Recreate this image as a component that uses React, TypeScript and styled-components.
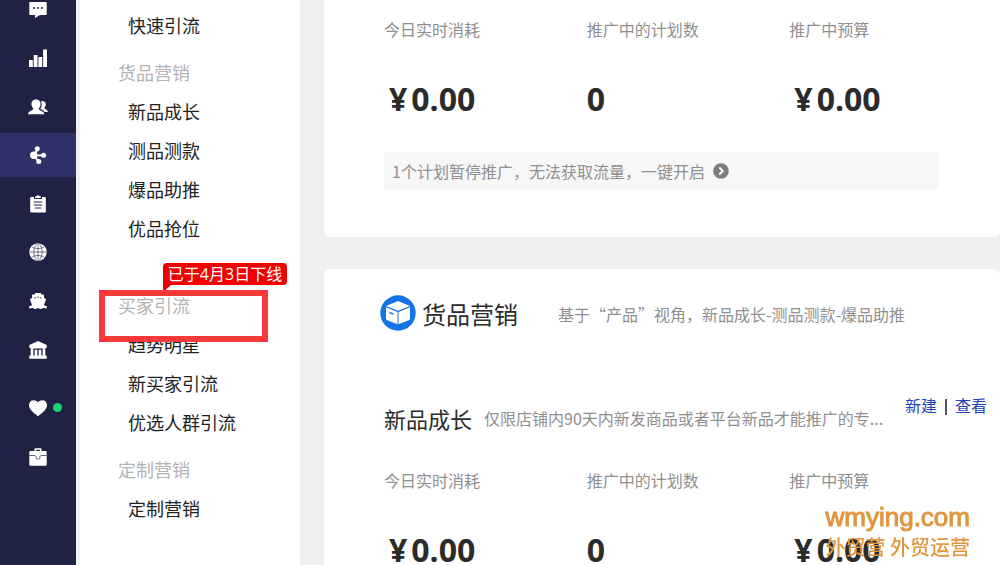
import React from "react";
import styled, { createGlobalStyle } from "styled-components";

const GlobalStyle = createGlobalStyle`
  *, *::before, *::after { box-sizing: border-box; }
  body {
    margin: 0;
    background: #f0f0f0;
    color: #2b2b2b;
    font-family: "Noto Sans CJK SC", "Open Sans", sans-serif;
    font-size: 16px;
  }
  ul, h2, h3, p, dl, dd { margin: 0; padding: 0; }
  ul { list-style: none; }
`;

const Shell = styled.div`
  display: flex;
  height: 100vh;
  overflow: hidden;
`;

const Rail = styled.nav`
  flex: 0 0 76px;
  background: #1f2244;
`;

const RailGroup = styled.ul<{ $rows: number; $height: number }>`
  display: grid;
  grid-template-rows: repeat(${(p) => p.$rows}, 1fr);
  align-items: center;
  height: ${(p) => p.$height}px;
`;

const RailList = styled.div`
  display: grid;
  gap: 9px;
  margin-top: -15px;
`;

const RailButton = styled.button<{ $active?: boolean }>`
  position: relative;
  display: flex;
  align-items: center;
  justify-content: center;
  width: 100%;
  height: 44px;
  padding: 0;
  border: 0;
  background: ${(p) => (p.$active ? "#2f3268" : "transparent")};
  color: #fff;
  cursor: pointer;
`;

const Dot = styled.span`
  position: absolute;
  top: 17px;
  right: 14px;
  width: 9px;
  height: 9px;
  border-radius: 50%;
  background: #12d673;
`;

const Menu = styled.aside`
  flex: 0 0 224px;
  padding: 6px 0 0 38px;
  border-left: 4px solid #f1f1f5;
  background: #fff;
`;

const MenuHeading = styled.h2<{ $gap?: number }>`
  position: relative;
  margin-top: ${(p) => p.$gap ?? 8}px;
  color: #b3b3b3;
  font-size: 18px;
  font-weight: 400;
  line-height: 39px;
`;

const MenuLink = styled.a`
  display: block;
  padding-left: 10px;
  color: #222;
  font-size: 18px;
  line-height: 39px;
  text-decoration: none;
`;

const Highlight = styled.span`
  position: absolute;
  z-index: 1;
  top: 4px;
  left: -19px;
  width: 169px;
  height: 52px;
  border: 6px solid #f8383a;
`;

const OfflineTag = styled.span`
  position: absolute;
  top: -23px;
  left: 45px;
  width: 124px;
  height: 22px;
  border-radius: 4px 4px 4px 0;
  background: #f00000;
  color: #fff;
  font-family: "Open Sans", "Noto Sans CJK SC", sans-serif;
  font-size: 16px;
  line-height: 22px;
  text-align: center;
  white-space: nowrap;

  &::after {
    content: "";
    position: absolute;
    top: 22px;
    left: 0;
    border-top: 7px solid #f00000;
    border-right: 8px solid transparent;
  }
`;

const Main = styled.main`
  flex: 1;
  min-width: 0;
  padding-left: 24px;
`;

const Card = styled.section<{ $top: number }>`
  margin-bottom: 32px;
  padding: ${(p) => p.$top}px 8px 48px 60px;
  border-radius: 6px;
  background: #fff;

  &:first-child {
    border-top-left-radius: 0;
    border-top-right-radius: 0;
  }
`;

const Metrics = styled.dl`
  display: grid;
  grid-template-columns: repeat(3, 1fr);
`;

const MetricLabel = styled.dt`
  color: #8f8f8f;
  line-height: 24px;
`;

const MetricValue = styled.dd`
  margin-top: 38px;
  font-family: "Open Sans", "Noto Sans CJK SC", sans-serif;
  font-size: 32px;
  font-weight: 700;
  line-height: 40px;
`;

const Currency = styled.span`
  margin: 0 4px 0 5px;
`;

const Notice = styled.div`
  display: flex;
  align-items: center;
  gap: 8px;
  height: 37px;
  margin: 33px 53px 0 0;
  padding-left: 8px;
  background: #f7f7f7;
  color: #8f8f8f;
`;

const NoticeButton = styled.button`
  display: flex;
  padding: 0;
  border: 0;
  background: none;
  cursor: pointer;
`;

const CardHeader = styled.header`
  display: flex;
  align-items: center;
  height: 36px;
  margin-left: -4px;
`;

const HeaderText = styled.div`
  display: flex;
  align-items: center;
  gap: 40px;
  padding: 2px 0 0 6px;
`;

const CardTitle = styled.h2`
  font-size: 24px;
  font-weight: 400;
  line-height: 36px;
  white-space: nowrap;
`;

const Hint = styled.p`
  color: #8f8f8f;
  line-height: 24px;
  white-space: nowrap;
`;

const PlanRow = styled.div`
  display: flex;
  align-items: center;
  height: 32px;
  margin: 71px 0 34px;
`;

const PlanTitle = styled.h3`
  margin-right: 12px;
  font-size: 22px;
  font-weight: 400;
  line-height: 32px;
  white-space: nowrap;
`;

const PlanActions = styled.div`
  display: flex;
  align-self: flex-start;
  gap: 8px;
  margin: -9px 5px 0 auto;
  line-height: 24px;
  white-space: nowrap;
`;

const ActionLink = styled.a`
  color: #1f44b8;
  text-decoration: none;
`;

const Divider = styled.span`
  width: 2px;
  height: 16px;
  margin-top: 6px;
  background: #555;
`;

const Watermark = styled.div`
  position: fixed;
  right: 30px;
  bottom: 4px;
  color: #e0963f;
  font-size: 20px;
  font-weight: 500;
  line-height: 28px;
  text-align: right;
`;

const WatermarkSite = styled.div`
  font-family: "Liberation Sans", sans-serif;
  font-size: 26px;
  font-weight: 400;
  line-height: 32px;
  -webkit-text-stroke: 1px #e0963f;
`;

const Icon = ({ children }: { children: React.ReactNode }) => (
  <svg width="18" height="18" viewBox="0 0 18 18" fill="currentColor" aria-hidden="true">
    {children}
  </svg>
);

const NAVY = "#1f2244";

const icons = {
  chat: (
    <Icon>
      <path d="M1 2h16a.7.7 0 0 1 .7.7v11.600a.7.7 0 0 1-.7.7h-6l-5 3v-3H1a.7.7 0 0 1-.7-.7V2.700A.7.7 0 0 1 1 2z" />
      <g fill={NAVY}><circle cx="5" cy="8" r="1" /><circle cx="9" cy="8" r="1" /><circle cx="13" cy="8" r="1" /></g>
    </Icon>
  ),
  chart: (
    <Icon>
      <path d="M0 11h3.800v7H0zM4.700 6h3.800v12H4.700zM9.400 8h3.800v10H9.400zM14.100.5H18V18h-3.900z" />
    </Icon>
  ),
  people: (
    <svg width="20" height="18" viewBox="0 0 20 18" fill="currentColor" aria-hidden="true">
      <path d="M8 1.500c2.900 0 4.600 1.900 4.600 4.600 0 1.800-.8 3.300-1.800 4.200v1c.5 1 5 1.700 5.500 4.900H0c.4-3.200 4.700-3.900 5.200-4.900v-1C4.200 9.400 3.400 7.900 3.400 6.100 3.400 3.400 5.100 1.500 8 1.500z" />
      <path d="M12.900 3c3-.5 4.900.9 4.900 3.300 0 1.400-.6 2.500-1.300 3.100v.9c.4.800 2.900 1.400 3.500 3.700h-3.400c-.9-1.500-2.500-2.300-4.200-3l.1-.7c.8-1 1.200-2.500 1.200-3.900 0-1.300-.3-2.500-.8-3.400z" />
    </svg>
  ),
  network: (
    <Icon>
      <path d="M5 9l4-6M5 9.300h9.500M5 9l4.700 7" stroke="currentColor" strokeWidth="1.800" />
      <circle cx="4.800" cy="9.200" r="3.700" /><circle cx="8.300" cy="2.700" r="2.500" />
      <circle cx="14.600" cy="9.300" r="2.500" /><circle cx="9.800" cy="15.500" r="2.500" />
    </Icon>
  ),
  clipboard: (
    <Icon>
      <path d="M2.200 2H5v2h8V2h2.800a1 1 0 0 1 1 1v13.500a1 1 0 0 1-1 1H2.200a1 1 0 0 1-1-1V3a1 1 0 0 1 1-1zM6.200 1.200h1.300a1.600 1.600 0 0 1 3 0h1.300V3H6.200z" />
      <path d="M4.800 7h8.400M4.800 10h8.400M5.800 13h6.400" stroke={NAVY} strokeWidth="1" />
    </Icon>
  ),
  globe: (
    <Icon>
      <circle cx="9" cy="9" r="8.700" />
      <path d="M9 .5v17M.5 9h17M3 3.800c3.500 2.300 8.500 2.300 12 0M3 14.200c3.500-2.300 8.500-2.300 12 0M7.500 1C4 5.500 4 12.500 7.500 17M10.500 1c3.500 4.500 3.500 11.500 0 16" fill="none" stroke={NAVY} strokeWidth=".6" />
    </Icon>
  ),
  ship: (
    <Icon>
      <path d="M6 1h6v1.500h2a1 1 0 0 1 1 1V6l1.500.8c.5.3.5.7.3 1.200L15 13c.8 1 1.800 1.300 3 1.300v2c-1.500.3-2.500 0-3.200-.5-1.800 1.400-3.800 1.400-5.800.2-2 1.200-4 1.200-5.800-.2-.7.5-1.700.8-3.200.5v-2c1.200 0 2.200-.3 3-1.300L1.200 8c-.2-.5-.2-.9.3-1.200L3 6V3.500a1 1 0 0 1 1-1h2z" />
      <path d="M5 6.200L9 5l4 1.200" fill="none" stroke={NAVY} strokeWidth=".8" strokeDasharray="2 1" />
    </Icon>
  ),
  bank: (
    <Icon>
      <path d="M9 0l8.700 4v3H.3V4zM1.700 6.500h14.600v8.300H1.700zM.3 14.500h17.400v3.200H.3z" />
      <path d="M5 14.500V8.200h8v6.300M9 8.200v6.300" fill="none" stroke={NAVY} strokeWidth="1.300" />
    </Icon>
  ),
  heart: (
    <Icon>
      <path d="M9 17.200C5 14 0 10.500 0 6.200 0 3.300 2 1.300 4.600 1.300 6.500 1.300 8 2.000 9 3.300c1-1.300 2.500-2 4.400-2C16 1.300 18 3.300 18 6.200c0 4.300-5 7.800-9 11z" />
    </Icon>
  ),
  briefcase: (
    <Icon>
      <path d="M5.500 3V1.300a1 1 0 0 1 1-1h5a1 1 0 0 1 1 1V3h4a1.200 1.200 0 0 1 1.200 1.200v12.300a1.200 1.200 0 0 1-1.200 1.200h-15A1.200 1.200 0 0 1 .3 16.500V4.200A1.200 1.200 0 0 1 1.500 3zm1.700 0h3.600V1.800H7.200z" fillRule="evenodd" />
      <path d="M.3 7.500h6.200M11.500 7.500h6.200M7 8v1.200a2 2 0 0 0 4 0V8" fill="none" stroke={NAVY} strokeWidth=".7" />
    </Icon>
  ),
};

type RailItem = { key: keyof typeof icons; label: string; active?: boolean; dot?: boolean };

const railMain: RailItem[] = [
  { key: "chat", label: "消息" },
  { key: "chart", label: "数据" },
  { key: "people", label: "客户" },
  { key: "network", label: "营销", active: true },
  { key: "clipboard", label: "订单" },
  { key: "globe", label: "全球" },
  { key: "ship", label: "物流" },
  { key: "bank", label: "金融" },
];

const railExtra: RailItem[] = [
  { key: "heart", label: "收藏", dot: true },
  { key: "briefcase", label: "工具" },
];

const RailItems = ({ items, height }: { items: RailItem[]; height: number }) => (
  <RailGroup $rows={items.length} $height={height}>
    {items.map((item) => (
      <li key={item.key}>
        <RailButton $active={item.active} aria-label={item.label}>
          {icons[item.key]}
          {item.dot && <Dot />}
        </RailButton>
      </li>
    ))}
  </RailGroup>
);

const MenuItems = ({ items }: { items: string[] }) => (
  <ul>
    {items.map((item) => (
      <li key={item}><MenuLink href="#">{item}</MenuLink></li>
    ))}
  </ul>
);

const Money = ({ amount }: { amount: string }) => (
  <MetricValue><Currency>¥</Currency>{amount}</MetricValue>
);

const MetricGroup = () => (
  <Metrics>
    <div><MetricLabel>今日实时消耗</MetricLabel><Money amount="0.00" /></div>
    <div><MetricLabel>推广中的计划数</MetricLabel><MetricValue>0</MetricValue></div>
    <div><MetricLabel>推广中预算</MetricLabel><Money amount="0.00" /></div>
  </Metrics>
);

const BoxLogo = () => (
  <svg width="36" height="36" viewBox="0 0 36 36" aria-hidden="true">
    <circle cx="18" cy="18" r="17.700" fill="#1473e6" />
    <path d="M18 6l12 5-12 4.800L6 11z" fill="#fff" />
    <path d="M6 12.300l11.500 4.600v12.300L7.300 25.300A1.900 1.900 0 0 1 6 23.500zM30 12.300l-11.500 4.600v12.300l10.200-3.900a1.900 1.900 0 0 0 1.300-1.800z" fill="#fff" />
    <path d="M9.500 17.500l4 1.600" stroke="#1473e6" strokeWidth="1.500" />
  </svg>
);

export default function App() {
  return (
    <>
      <GlobalStyle />
      <Shell>
        <Rail>
          <RailList>
            <RailItems items={railMain} height={389} />
            <RailItems items={railExtra} height={98} />
          </RailList>
        </Rail>
        <Menu>
          <MenuItems items={["快速引流"]} />
          <MenuHeading>货品营销</MenuHeading>
          <MenuItems items={["新品成长", "测品测款", "爆品助推", "优品抢位"]} />
          <MenuHeading $gap={38}>
            买家引流
            <OfflineTag>已于4月3日下线</OfflineTag>
            <Highlight />
          </MenuHeading>
          <MenuItems items={["趋势明星", "新买家引流", "优选人群引流"]} />
          <MenuHeading>定制营销</MenuHeading>
          <MenuItems items={["定制营销"]} />
        </Menu>
        <Main>
          <Card $top={17}>
            <MetricGroup />
            <Notice>
              <span>1个计划暂停推广，无法获取流量，一键开启</span>
              <NoticeButton aria-label="一键开启">
                <svg width="16" height="16" viewBox="0 0 16 16" aria-hidden="true">
                  <circle cx="8" cy="8" r="7.800" fill="#7d7d7d" />
                  <path d="M6.300 4.500L9.800 8l-3.500 3.500" fill="none" stroke="#fff" strokeWidth="1.800" />
                </svg>
              </NoticeButton>
            </Notice>
          </Card>
          <Card $top={26}>
            <CardHeader>
              <BoxLogo />
              <HeaderText>
                <CardTitle>货品营销</CardTitle>
                <Hint>基于“产品”视角，新品成长-测品测款-爆品助推</Hint>
              </HeaderText>
            </CardHeader>
            <PlanRow>
              <PlanTitle>新品成长</PlanTitle>
              <Hint>仅限店铺内90天内新发商品或者平台新品才能推广的专...</Hint>
              <PlanActions>
                <ActionLink href="#">新建</ActionLink>
                <Divider />
                <ActionLink href="#">查看</ActionLink>
              </PlanActions>
            </PlanRow>
            <MetricGroup />
          </Card>
        </Main>
      </Shell>
      <Watermark>
        <WatermarkSite>wmying.com</WatermarkSite>
        外贸营 外贸运营
      </Watermark>
    </>
  );
}
